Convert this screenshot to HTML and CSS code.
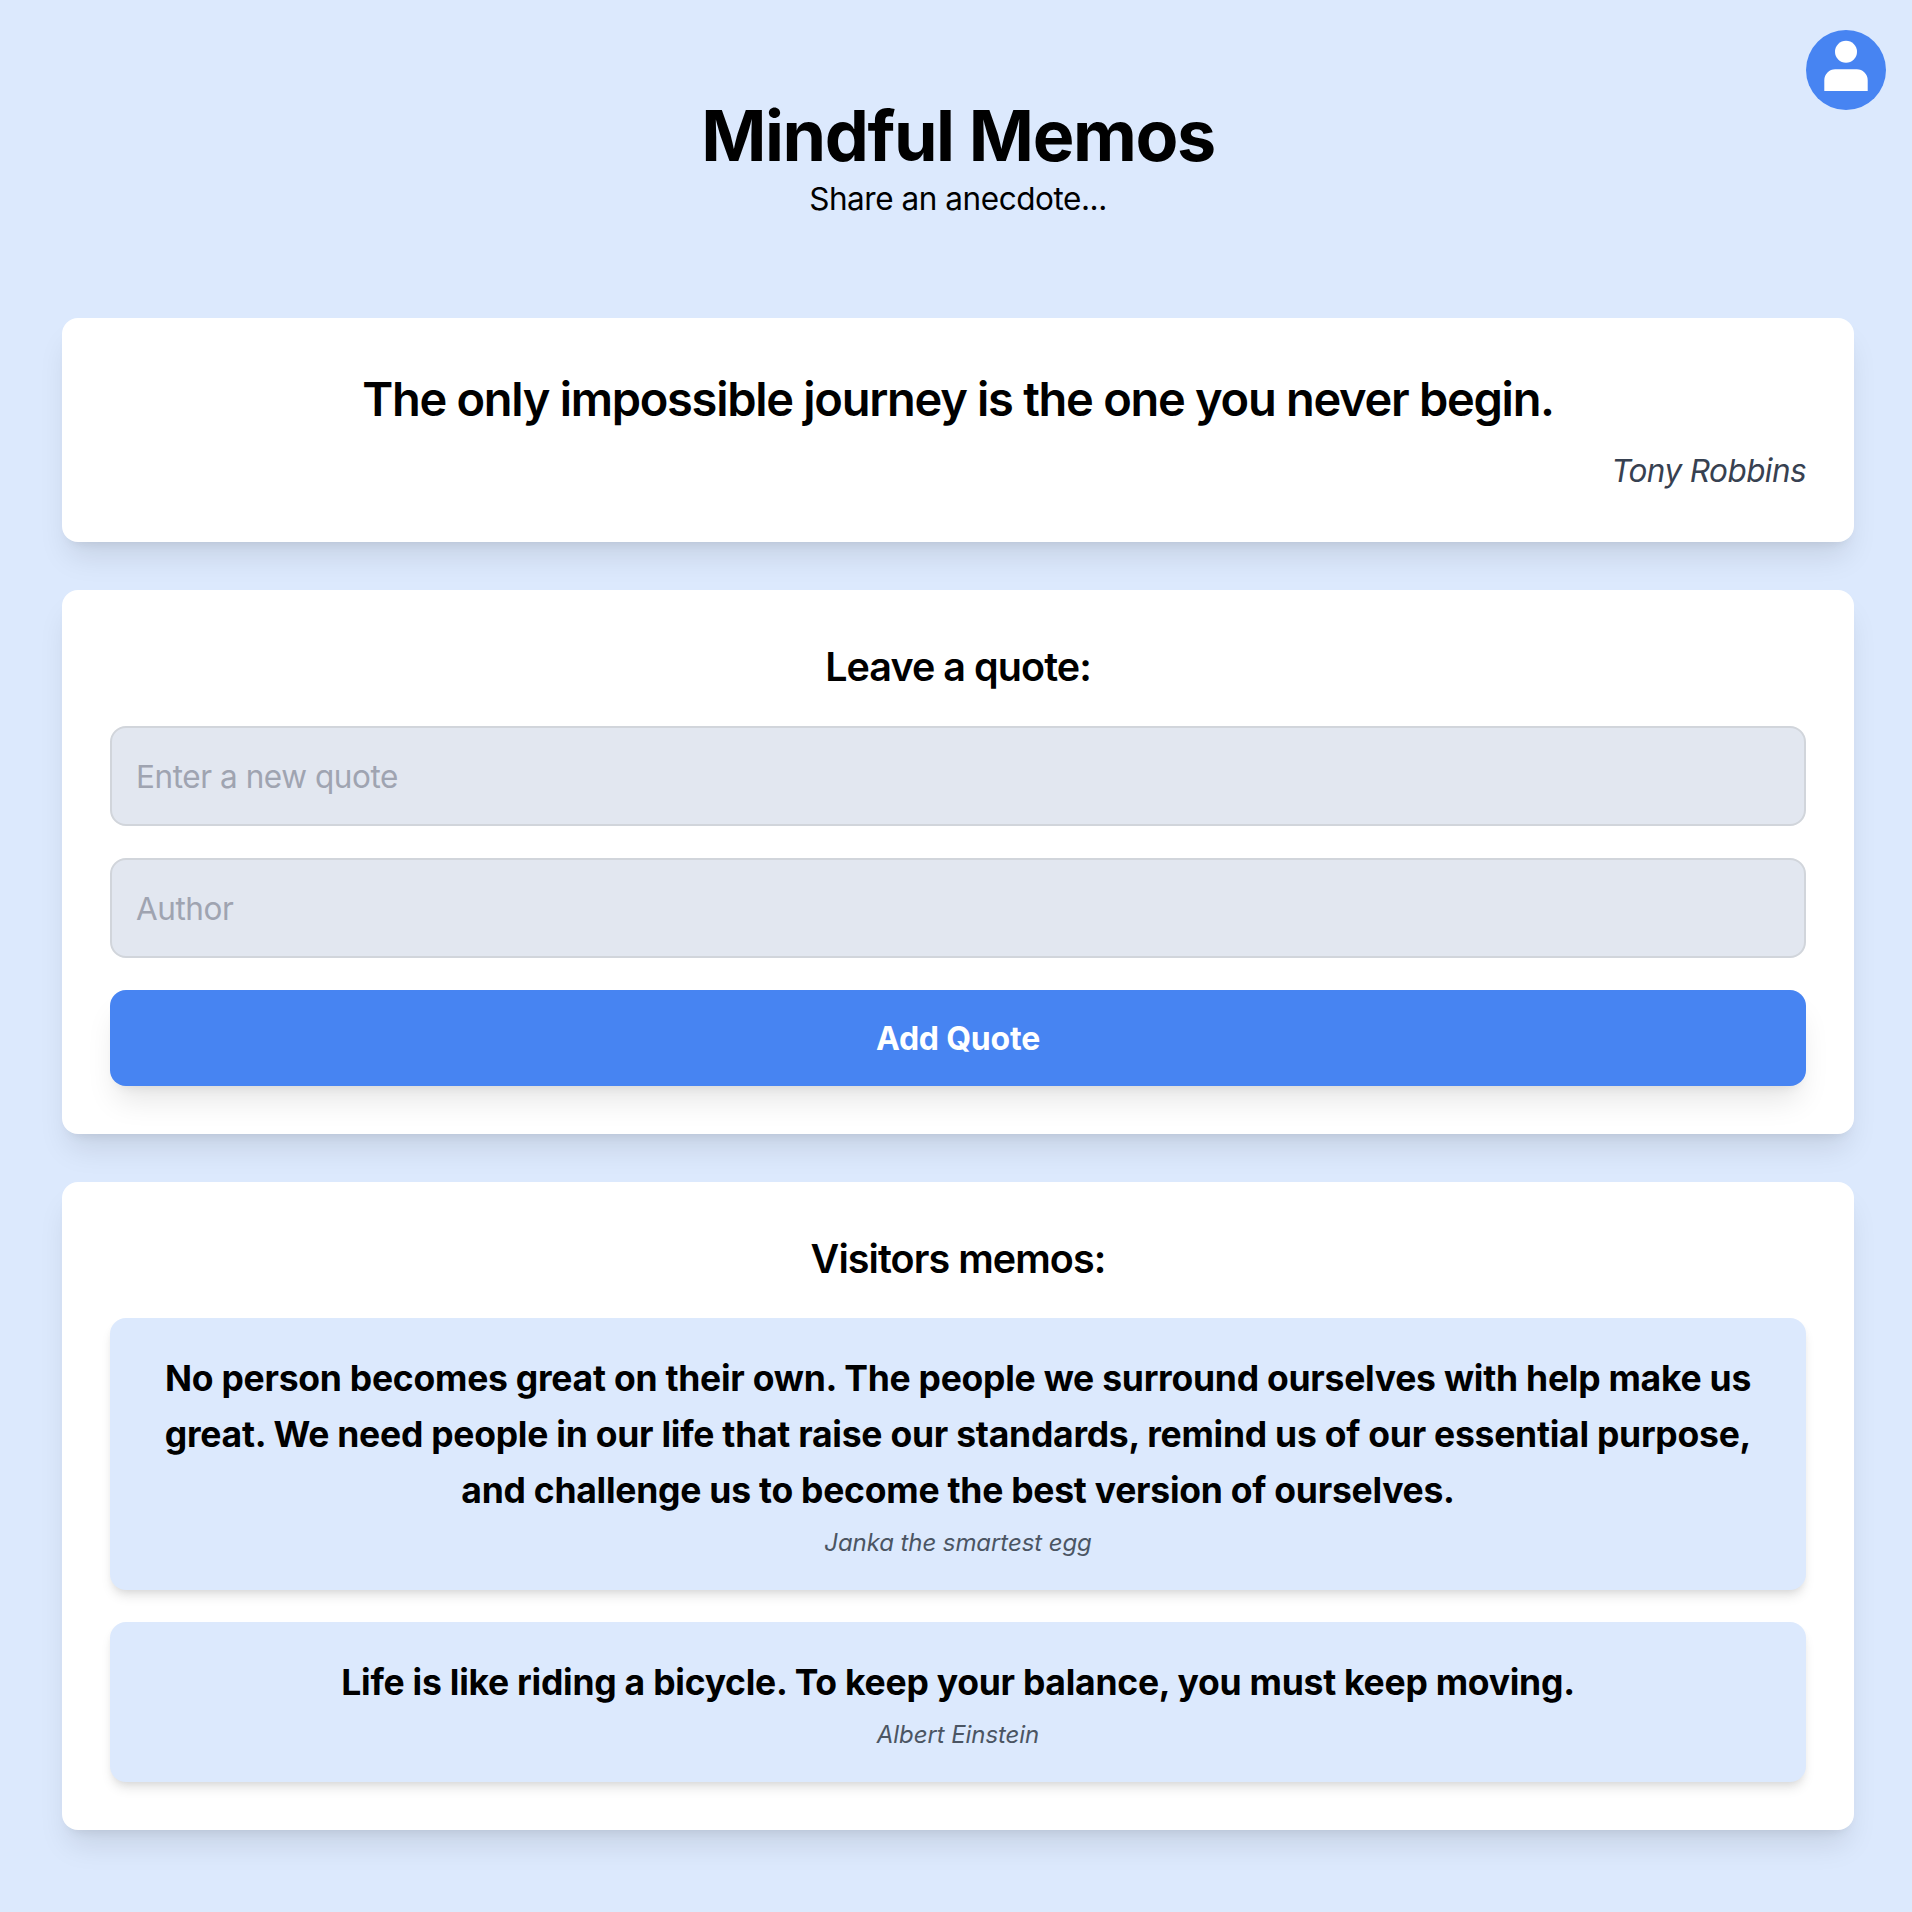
FILE: index.html
```html
<!DOCTYPE html>
<html lang="en">
<head>
<meta charset="utf-8">
<title>Mindful Memos</title>
<link rel="stylesheet" href="styles.css">
</head>
<body>
<button class="avatar" aria-label="Account">
  <svg viewBox="0 0 80 80" width="80" height="80"><circle cx="40" cy="21.800" r="11"/><path d="M18.300 61V50.200a10.900 10.900 0 0 1 10.900-10.900h21.600a10.900 10.900 0 0 1 10.900 10.900V61Z"/></svg>
</button>
<main class="page">
  <header class="header">
    <h1 class="title">Mindful Memos</h1>
    <p class="subtitle">Share an anecdote...</p>
  </header>
  <section class="card featured">
    <h2 class="featured-quote">The only impossible journey is the one you never begin.</h2>
    <p class="featured-author">Tony Robbins</p>
  </section>
  <section class="card">
    <h3 class="heading">Leave a quote:</h3>
    <form class="form">
      <input class="field" type="text" placeholder="Enter a new quote">
      <input class="field" type="text" placeholder="Author">
      <button class="submit" type="button">Add Quote</button>
    </form>
  </section>
  <section class="card">
    <h3 class="heading">Visitors memos:</h3>
    <div class="memos">
      <article class="memo">
        <p class="memo-text">No person becomes great on their own. The people we surround ourselves with help make us great. We need people in our life that raise our standards, remind us of our essential purpose, and challenge us to become the best version of ourselves.</p>
        <p class="memo-author">Janka the smartest egg</p>
      </article>
      <article class="memo">
        <p class="memo-text">Life is like riding a bicycle. To keep your balance, you must keep moving.</p>
        <p class="memo-author">Albert Einstein</p>
      </article>
    </div>
  </section>
</main>
</body>
</html>
```
FILE: styles.css
```css
* { box-sizing: border-box; }
body {
  margin: 0;
  min-height: 1912px;
  background: #dce9fd;
  color: #000;
  font-family: Inter, "Liberation Sans", sans-serif;
}
h1, h2, h3, p { margin: 0; }
.avatar {
  position: absolute;
  top: 30px;
  right: 26px;
  width: 80px;
  height: 80px;
  padding: 0;
  border: 0;
  border-radius: 50%;
  background: #4784f2;
}
.avatar svg { display: block; fill: #fff; }
.page {
  display: flex;
  flex-direction: column;
  gap: 48px;
  width: 1792px;
  margin-left: 62px;
  padding-top: 96px;
}
.header { height: 174px; text-align: center; }
.title { font-size: 70px; line-height: 80px; font-weight: 700; letter-spacing: -1.400px; }
.subtitle { font-size: 31.500px; line-height: 46px; letter-spacing: -0.450px; }
.card {
  padding: 48px;
  border-radius: 16px;
  background: #fff;
  box-shadow: 0 20px 30px -6px rgb(0 0 0 / .1), 0 8px 12px -8px rgb(0 0 0 / .1);
}
.featured { height: 224px; }
.featured-quote {
  font-size: 47px;
  line-height: 66px;
  font-weight: 600;
  letter-spacing: -1.280px;
  text-align: center;
}
.featured-author {
  margin-top: 15px;
  font-size: 31.500px;
  line-height: 48px;
  letter-spacing: -0.580px;
  font-style: italic;
  text-align: right;
  color: #374151;
}
.heading {
  font-size: 39.500px;
  line-height: 58px;
  font-weight: 600;
  letter-spacing: -0.940px;
  text-align: center;
}
.form, .memos { display: flex; flex-direction: column; gap: 32px; margin-top: 30px; }
.field {
  width: 100%;
  height: 100px;
  padding: 0 24px;
  border: 2px solid #d1d5db;
  border-radius: 16px;
  background: #e2e7f0;
  font: 31.500px Inter, sans-serif;
  letter-spacing: -0.440px;
}
.field::placeholder { color: #9fa4b1; }
.submit {
  height: 96px;
  padding: 0;
  border: 0;
  border-radius: 16px;
  background: #4784f2;
  color: #fff;
  font: 700 32px Inter, sans-serif;
  letter-spacing: -0.200px;
  box-shadow: 0 20px 30px -6px rgb(0 0 0 / .1), 0 8px 12px -8px rgb(0 0 0 / .1);
}
.memo {
  padding: 33px 32px 31px;
  border-radius: 16px;
  background: #dce9fd;
  text-align: center;
  box-shadow: 0 8px 12px -2px rgb(0 0 0 / .1), 0 4px 8px -4px rgb(0 0 0 / .1);
}
.memo-text { font-size: 35.500px; line-height: 56px; font-weight: 700; letter-spacing: -0.250px; }
.memo-author {
  margin-top: 8px;
  font-size: 24px;
  line-height: 32px;
  letter-spacing: -0.080px;
  font-style: italic;
  color: #4b5563;
}
```
